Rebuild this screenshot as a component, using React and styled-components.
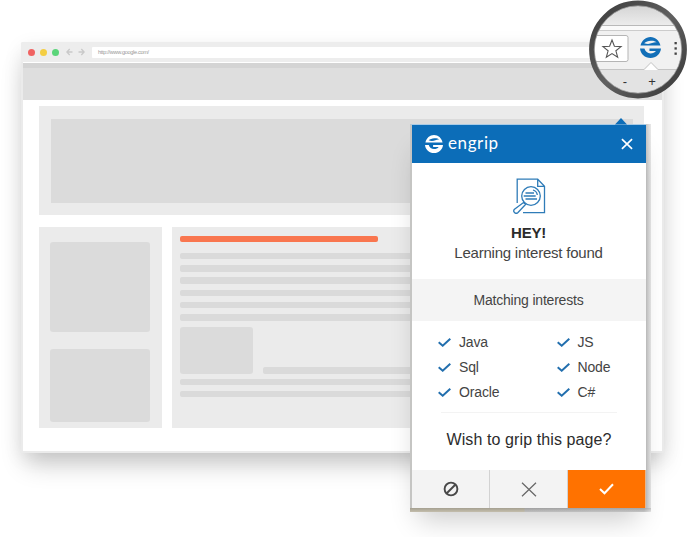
import React from "react";
import styled, { createGlobalStyle } from "styled-components";

const Global = createGlobalStyle`
  *, *::before, *::after { box-sizing: border-box; }
  body { margin: 0; background: #fff; font-family: "Liberation Sans", Arial, sans-serif; overflow: hidden; }
  svg { display: block; }
`;

const Stage = styled.main`
  position: relative;
  width: 687px;
  height: 537px;
  overflow: hidden;
  padding: 42px 0 0 21px;
`;

const Browser = styled.section`
  width: 643px;
  height: 411px;
  background: #fff;
  border: solid #ebebeb;
  border-width: 0 2px 2px;
  border-radius: 2px 2px 0 0;
  box-shadow: 0 16px 24px -5px rgba(0, 0, 0, 0.2), 0 5px 20px rgba(0, 0, 0, 0.07);
`;

const AddressRow = styled.header`
  display: flex;
  align-items: center;
  height: 20px;
  margin: 0 -2px;
  padding-left: 7px;
  background: #ededed;
  border-radius: 2px 2px 0 0;
`;

const Dot = styled.span`
  width: 7px;
  height: 7px;
  margin-right: 5.2px;
  border-radius: 50%;
  background: ${(p) => p.$color};
`;

const NavArrows = styled.svg`
  margin: 0 7px 0 1px;
`;

const Address = styled.div`
  flex: 1;
  height: 11px;
  padding-left: 6.5px;
  background: #fff;
  border-radius: 1px;
  font-size: 5.6px;
  line-height: 11px;
  letter-spacing: -0.32px;
  color: #999;
`;

const Banner = styled.div`
  height: 37px;
  margin-top: 1px;
  background: #dedede;
  border-top: 5px solid #d4d4d4;
`;

const Content = styled.div`
  display: grid;
  grid-template-columns: 123px 472px;
  grid-template-rows: 109px 201px;
  gap: 12px 10px;
  padding: 6px 0 0 16px;
`;

const Panel = styled.div`
  background: #ebebeb;
  padding: ${(p) => p.$pad};
  grid-column: ${(p) => (p.$wide ? "1 / -1" : "auto")};
`;

const Block = styled.div`
  width: ${(p) => p.$w}px;
  height: ${(p) => p.$h}px;
  margin-bottom: ${(p) => p.$gap || 0}px;
  background: #dbdbdb;
  border-radius: ${(p) => (p.$square ? 0 : 3)}px;
`;

const Line = styled.div`
  width: ${(p) => p.$w || 440}px;
  height: 6.4px;
  margin-bottom: ${(p) => (p.$gap === undefined ? 5.9 : p.$gap)}px;
  background: ${(p) => (p.$accent ? "#f9764f" : "#dadada")};
  border-radius: 2px;
`;

const Split = styled.div`
  display: flex;
  align-items: flex-end;
  gap: 10px;
  margin-bottom: 5px;
`;

const PopupShadow = styled.div`
  position: absolute;
  left: 410px;
  top: 124px;
  width: 241px;
  height: 388px;
  background: linear-gradient(90deg, #c4c4c4 236px, #d4d4d4 238px, #e9e9e9 241px);
`;

const Popup = styled.aside`
  position: absolute;
  left: 410px;
  top: 124px;
  width: 236px;
  height: 384px;
  background: #fff;
  border-left: 2px solid #c5c5c3;
  border-top: 1px solid #a9cbe5;
  box-shadow: 0 20px 26px -8px rgba(0, 0, 0, 0.2);
`;

const ShadowFoot = styled.div`
  position: absolute;
  left: 410px;
  top: 508px;
  width: 241px;
  height: 4px;
  background:
    linear-gradient(180deg, rgba(0, 0, 0, 0.16), transparent),
    linear-gradient(90deg, #c4beac 114px, #bfbfbf 115px, #c4c4c4 234px, #e6e6e6 241px);
`;

const Pointer = styled.svg`
  position: absolute;
  left: 615px;
  top: 118px;
`;

const PopupHead = styled.header`
  display: flex;
  align-items: center;
  height: 38px;
  padding: 0 13px 0 13px;
  background: #0c6db8;
  color: #fff;
`;

const Brand = styled.span`
  flex: 1;
  padding: 0 0 3px 5px;
  font: 400 17px/20px Lato, sans-serif;
  letter-spacing: 0.6px;
`;

const Intro = styled.div`
  display: flex;
  flex-direction: column;
  align-items: center;
  height: 116px;
  padding: 15px 1px 0 0;
  font-size: 15px;
  line-height: 20px;
  letter-spacing: -0.22px;
  color: #444;
`;

const Hey = styled.strong`
  margin-top: 9px;
  color: #2b2b2b;
  line-height: 20px;
`;

const Strip = styled.div`
  height: 42px;
  padding-right: 1px;
  background: #f4f4f4;
  font-size: 14px;
  line-height: 42px;
  letter-spacing: -0.2px;
  text-align: center;
  color: #444;
`;

const Interests = styled.ul`
  display: grid;
  grid-template-columns: 118.5px 1fr;
  grid-auto-rows: 25px;
  height: 91px;
  margin: 0 29px 0 26px;
  padding: 9px 0 0;
  list-style: none;
`;

const Interest = styled.li`
  display: flex;
  align-items: center;
  gap: 8px;
  font-size: 14px;
  line-height: 16px;
  letter-spacing: -0.15px;
  color: #444;
`;

const InterestName = styled.span`
  margin-top: -2px;
`;

const Question = styled.div`
  height: 58px;
  margin: 0 29px;
  border-top: 1px solid #f3f3f3;
  font-size: 16px;
  line-height: 53px;
  letter-spacing: 0.1px;
  text-align: center;
  white-space: nowrap;
  color: #2c2c2c;
`;

const Actions = styled.footer`
  display: grid;
  grid-template-columns: 78px 78px 78px;
  height: 38px;
`;

const Action = styled.button`
  display: flex;
  align-items: center;
  justify-content: center;
  padding: 0;
  border: 0;
  border-right: 1px solid ${(p) => (p.$primary ? "#e5b78f" : "#d2d2d2")};
  background: ${(p) => (p.$primary ? "#ff7200" : "#f3f3f3")};
`;

const Lens = styled.svg`
  position: absolute;
  left: 588px;
  top: 0;
`;

const Glyph = ({ size = 18, ...rest }) => (
  <svg width={size} height={size} viewBox="0 0 20 20" fill="currentColor" {...rest}>
    <path fillRule="evenodd" d="M.5 8.200C1.500 3.400 5.300 0 10 0s8.500 3.400 9.500 8.200ZM4 5.900C7 7 9.500 6.600 11.500 5.800S14.800 5 16 5.200C14.500 3.900 12.500 3.400 10.300 3.600 7.800 3.800 5.500 4.500 4 5.900Z" />
    <path d="M0 11H4.200C5 14 7.200 15.600 10 15.600c2.300 0 4.100-.8 5.200-2.300H9V11H20C19.500 16.200 15.300 20 10 20S.5 16.200 0 11Z" />
  </svg>
);

const Tick = () => (
  <svg width="13" height="9" viewBox="0 0 13 9" fill="none" stroke="#226fae" strokeWidth="2">
    <path d="M.7 4.200 4.700 7.700 12.300.8" />
  </svg>
);

const DocumentIcon = () => (
  <svg width="34" height="36" viewBox="0 0 34 36" fill="none" stroke="#2f7cb8" strokeWidth="1.300">
    <path d="M5.200 25V1.200H25.700L32.500 8.300V34.600H11M25.700 1.200V8.300H32.500" />
    <circle cx="19" cy="18" r="9.300" />
    <path d="M21 12c2.700.8 4 2.500 4.300 5M13.500 15H22M11.700 18h12M13.500 21H25" />
    <path d="m11.500 24.500 2 2-7.500 8c-1 1-2.500 1-3.500 0s-1-2.200 0-3.200Z" />
  </svg>
);

export default function App() {
  return (
    <Stage>
      <Global />
      <Browser>
        <AddressRow>
          <Dot $color="#f06362" />
          <Dot $color="#f4ce43" />
          <Dot $color="#5bd57a" />
          <NavArrows width="19" height="8" viewBox="0 0 19 8" fill="none" stroke="#c9c9c9" strokeWidth="1.300">
            <path d="M6.500 4H1M3.700 1 .9 4l2.800 3M12.500 4H18M15.300 1l2.800 3-2.800 3" />
          </NavArrows>
          <Address>http://www.google.com/</Address>
        </AddressRow>
        <Banner />
        <Content>
          <Panel $wide $pad="13px 11.500px">
            <Block $square $w={582} $h={84} />
          </Panel>
          <Panel $pad="15px 11px">
            <Block $w={100} $h={89.5} $gap={17.5} />
            <Block $w={100} $h={73} />
          </Panel>
          <Panel $pad="8.500px 8px">
            <Line $accent $w={198} $gap={11} />
            <Line /><Line /><Line /><Line /><Line /><Line />
            <Split>
              <Block $w={72.5} $h={47} />
              <Line $w={358} $gap={0} />
            </Split>
            <Line /><Line />
          </Panel>
        </Content>
      </Browser>

      <PopupShadow />
      <Popup>
        <PopupHead>
          <Glyph />
          <Brand>engrip</Brand>
          <svg width="12" height="12" viewBox="0 0 13 12" stroke="#fff" strokeWidth="1.800">
            <path d="m1 .7 11 10.600M12 .7 1 11.300" />
          </svg>
        </PopupHead>
        <Intro>
          <DocumentIcon />
          <Hey>HEY!</Hey>
          <span>Learning interest found</span>
        </Intro>
        <Strip>Matching interests</Strip>
        <Interests>
          {["Java", "JS", "Sql", "Node", "Oracle", "C#"].map((name) => (
            <Interest key={name}><Tick /><InterestName>{name}</InterestName></Interest>
          ))}
        </Interests>
        <Question>Wish to grip this page?</Question>
        <Actions>
          <Action aria-label="Block">
            <svg width="16" height="16" viewBox="0 0 16 16" fill="none" stroke="#484848" strokeWidth="1.900">
              <circle cx="8" cy="8" r="6.400" /><path d="m12.500 3.500-9 9" />
            </svg>
          </Action>
          <Action aria-label="Dismiss">
            <svg width="16" height="15" viewBox="0 0 16 15" stroke="#666" strokeWidth="1.200">
              <path d="m1 .7 14 13.600M15 .7 1 14.300" />
            </svg>
          </Action>
          <Action $primary aria-label="Accept">
            <svg width="15" height="12" viewBox="0 0 15 12" fill="none" stroke="#fff" strokeWidth="2">
              <path d="m1 6 4.500 4.300L14 1.200" />
            </svg>
          </Action>
        </Actions>
      </Popup>
      <ShadowFoot />
      <Pointer width="12" height="7" viewBox="0 0 12 7"><path d="M0 6.500 6 0l6 6.500Z" fill="#0c6db8" /></Pointer>

      <Lens width="99" height="99" viewBox="0 0 99 99">
        <defs>
          <clipPath id="glass"><circle cx="50" cy="49.500" r="45" /></clipPath>
          <linearGradient id="tab" x1="0" y1="0" x2="0" y2="1">
            <stop offset="0" stopColor="#d5d5d5" /><stop offset="1" stopColor="#ececec" />
          </linearGradient>
          <linearGradient id="rim" x1="0" y1="0" x2="1" y2="1">
            <stop offset="0" stopColor="#3a3a3a" /><stop offset=".5" stopColor="#606060" /><stop offset="1" stopColor="#383838" />
          </linearGradient>
        </defs>
        <g clipPath="url(#glass)">
          <rect width="99" height="99" fill="#f1f1f1" />
          <rect width="99" height="25" fill="#d8d8d8" />
          <path d="M13 25 24 6H76L87 25Z" fill="url(#tab)" />
          <path d="M0 25.500H99" stroke="#b9b9b9" />
          <rect y="26" width="99" height="4" fill="#fafafa" />
          <path d="M0 30.500H99" stroke="#ccc" />
          <rect x="-10" y="35.500" width="50" height="26" rx="2" fill="#fff" stroke="#b5b5b5" />
          <path d="M0 69.500H56L63 62.500 70 69.500H99V99H0Z" fill="#e3e3e3" stroke="#c5c5c5" />
          <path d="M56.500 70 63 63.200 69.500 70Z" fill="#fff" />
          <path d="M88.500 70V99" stroke="#cfcfcf" />
          <path d="m24 40 2.400 6.300 6.700.3-5.200 4.200 1.800 6.500-5.700-3.700-5.700 3.700 1.800-6.500-5.200-4.200 6.700-.3Z" fill="#fff" stroke="#555" strokeWidth="1.100" />
          <Glyph size={21} x="52" y="37" color="#126fb8" />
          <g fill="#444"><rect x="86.500" y="42" width="2.300" height="2.300" /><rect x="86.500" y="47.300" width="2.300" height="2.300" /><rect x="86.500" y="52.500" width="2.300" height="2.300" /></g>
          <g fill="#333" fontSize="13" textAnchor="middle" fontFamily="Liberation Sans, Arial, sans-serif">
            <text x="37" y="86">-</text><text x="64" y="86">+</text>
          </g>
        </g>
        <circle cx="50" cy="49.500" r="46.200" fill="none" stroke="url(#rim)" strokeWidth="5.400" />
        <circle cx="50" cy="49.500" r="43.700" fill="none" stroke="#aaa" strokeWidth="1" opacity=".7" />
      </Lens>
    </Stage>
  );
}
